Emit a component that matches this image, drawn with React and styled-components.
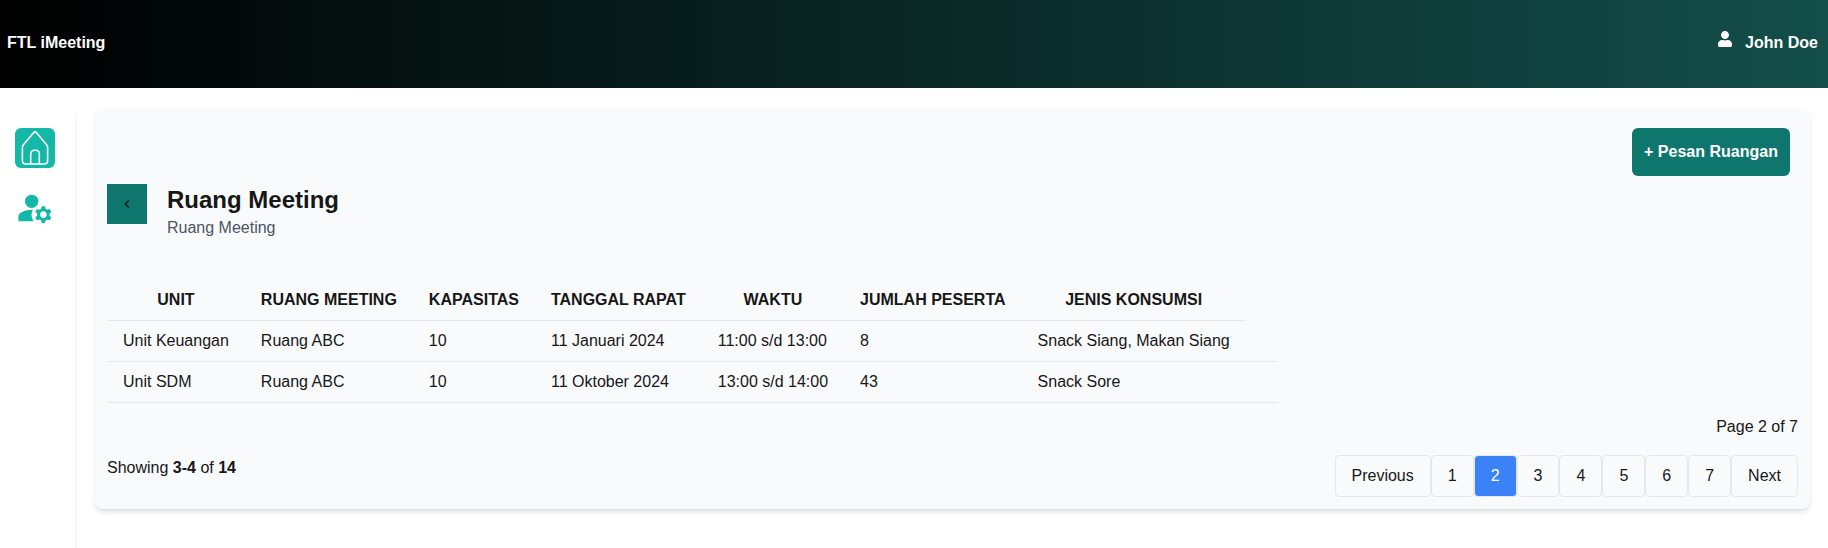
import React from "react";
import styled, { createGlobalStyle } from "styled-components";
import { FaUser } from "react-icons/fa";
import { MdManageAccounts, MdKeyboardArrowLeft } from "react-icons/md";

const GlobalStyle = createGlobalStyle`
  *, *::before, *::after { box-sizing: border-box; }
  body {
    margin: 0;
    background: #fff;
    color: #171717;
    font-family: "Liberation Sans", Arial, sans-serif;
    font-size: 16px;
    line-height: 24px;
  }
  button { font: inherit; color: inherit; border: 0; margin: 0; padding: 0; cursor: pointer; }
  svg { display: block; }
`;

const Page = styled.div`
  height: 100vh;
  display: flex;
  flex-direction: column;
  overflow: hidden;
`;

const Header = styled.header`
  flex: none;
  height: 88px;
  padding: 5px 10px 7px 7px;
  display: flex;
  align-items: center;
  justify-content: space-between;
  color: #fff;
  font-weight: 700;
  background: linear-gradient(to right, #000, #134e4a);
`;

const UserInfo = styled.div`
  display: flex;
  align-items: flex-start;
  gap: 12px;
`;

const UserIcon = styled(FaUser)`
  width: 16px;
  height: 16px;
`;

const Body = styled.div`
  flex: 1;
  min-height: 0;
  display: flex;
  align-items: flex-start;
  padding: 20px 18px 0 0;
  gap: 20px;
`;

const Sidebar = styled.nav`
  flex: none;
  width: 75px;
  height: 640px;
  padding: 20px 15px;
  display: flex;
  flex-direction: column;
  gap: 20px;
  background: #fff;
  box-shadow: 0 4px 6px -1px rgba(0, 0, 0, 0.1), 0 2px 4px -2px rgba(0, 0, 0, 0.1);
`;

const NavButton = styled.a`
  width: 40px;
  height: 40px;
  display: flex;
  border-radius: 6px;
  color: ${(p) => (p.$active ? "#fff" : "#14b8a6")};
  background: ${(p) => (p.$active ? "#14b8a6" : "transparent")};
`;

const Card = styled.main`
  flex: 1;
  height: 401px;
  padding: 20px 12px 12px;
  display: flex;
  flex-direction: column;
  border-radius: 8px;
  background: #f9fafb;
  box-shadow: 0 4px 6px -1px rgba(0, 0, 0, 0.1), 0 2px 4px -2px rgba(0, 0, 0, 0.1);
`;

const BookButton = styled.button`
  align-self: flex-end;
  width: 158px;
  height: 48px;
  margin-right: 8px;
  border-radius: 6px;
  background: #0f766e;
  color: #fff;
  font-weight: 700;
`;

const TitleBar = styled.div`
  display: flex;
  gap: 20px;
  margin-top: 8px;
`;

const BackButton = styled.button`
  width: 40px;
  height: 40px;
  display: flex;
  align-items: center;
  justify-content: center;
  background: #0f766e;
`;

const Title = styled.h1`
  margin: 0;
  font-size: 24px;
  line-height: 32px;
  font-weight: 700;
`;

const Subtitle = styled.p`
  margin: 0;
  color: #4b5563;
`;

const Table = styled.table`
  align-self: flex-start;
  margin-top: 40px;
  border-collapse: collapse;
`;

const Th = styled.th`
  padding: 8px 16px;
  border-bottom: 1px solid #e5e7eb;
  text-transform: uppercase;
  white-space: nowrap;
`;

const Td = styled.td`
  padding: 8px 16px;
  border-bottom: 1px solid #e5e7eb;
  white-space: nowrap;
`;

const Footer = styled.footer`
  margin-top: auto;
  display: flex;
  align-items: flex-start;
  justify-content: space-between;
`;

const Summary = styled.span`
  margin-top: 41px;
`;

const Pager = styled.div`
  display: flex;
  flex-direction: column;
  align-items: flex-end;
  gap: 16px;
`;

const PageList = styled.div`
  display: flex;
`;

const PageButton = styled.button`
  padding: 8px 16px;
  border: 1px solid #e5e7eb;
  border-radius: 4px;
  background: ${(p) => (p.$current ? "#3b82f6" : "transparent")};
  color: ${(p) => (p.$current ? "#fff" : "inherit")};
`;

const columns = ["Unit", "Ruang Meeting", "Kapasitas", "Tanggal Rapat", "Waktu", "Jumlah Peserta", "Jenis Konsumsi"];

const bookings = [
  ["Unit Keuangan", "Ruang ABC", "10", "11 Januari 2024", "11:00 s/d 13:00", "8", "Snack Siang, Makan Siang"],
  ["Unit SDM", "Ruang ABC", "10", "11 Oktober 2024", "13:00 s/d 14:00", "43", "Snack Sore"],
];

const pages = ["Previous", "1", "2", "3", "4", "5", "6", "7", "Next"];

function HouseIcon() {
  return (
    <svg width="40" height="40" viewBox="0 0 40 40" fill="none" stroke="currentColor" strokeWidth="1.6" strokeLinejoin="round">
      <path d="M18.7 4.6q1.3-1.3 2.6 0L31.8 17q.8 1.100.8 2.600V32.500q0 3.500-3.500 3.500H10.900q-3.500 0-3.500-3.500V19.600q0-1.500.8-2.600z" />
      <path d="M15.700 36V26q0-3.800 3.800-3.800h1q3.800 0 3.800 3.800v10" />
    </svg>
  );
}

export default function App() {
  return (
    <Page>
      <GlobalStyle />
      <Header>
        <span>FTL iMeeting</span>
        <UserInfo>
          <UserIcon />
          <span>John Doe</span>
        </UserInfo>
      </Header>
      <Body>
        <Sidebar>
          <NavButton $active><HouseIcon /></NavButton>
          <NavButton><MdManageAccounts size={40} /></NavButton>
        </Sidebar>
        <Card>
          <BookButton>+ Pesan Ruangan</BookButton>
          <TitleBar>
            <BackButton><MdKeyboardArrowLeft size={16} /></BackButton>
            <div>
              <Title>Ruang Meeting</Title>
              <Subtitle>Ruang Meeting</Subtitle>
            </div>
          </TitleBar>
          <Table>
            <thead>
              <tr>{columns.map((name) => <Th key={name}>{name}</Th>)}</tr>
            </thead>
            <tbody>
              {bookings.map((row) => (
                <tr key={row[0]}>
                  {row.map((value, i) => <Td key={i}>{value}</Td>)}
                  <Td />
                </tr>
              ))}
            </tbody>
          </Table>
          <Footer>
            <Summary>Showing <b>3-4</b> of <b>14</b></Summary>
            <Pager>
              <span>Page 2 of 7</span>
              <PageList>
                {pages.map((label) => (
                  <PageButton key={label} $current={label === "2"}>{label}</PageButton>
                ))}
              </PageList>
            </Pager>
          </Footer>
        </Card>
      </Body>
    </Page>
  );
}
